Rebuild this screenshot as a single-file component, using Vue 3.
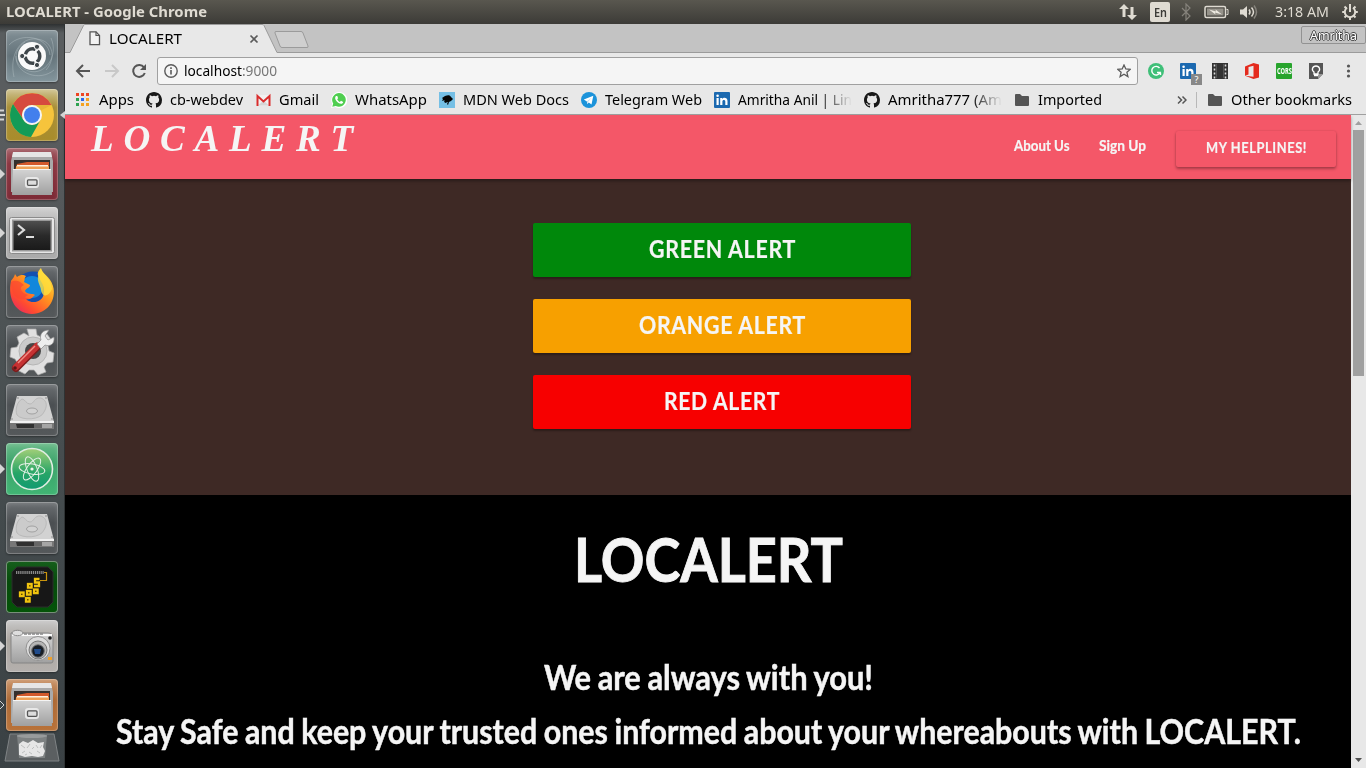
<script setup>
// Stretches a label horizontally so that it occupies an exact width.
const vFit = {
  mounted(el, { value }) {
    const natural = el.getBoundingClientRect().width
    el.style.transform = `scaleX(${value / natural})`
    el.style.marginRight = `${value - natural}px`
  }
}

const launcher = [
  { icon: 'dash', tile: 'slate' },
  { icon: 'chrome', tile: 'gold', mark: 'multi', active: true },
  { icon: 'files', tile: 'wine', mark: 'solid' },
  { icon: 'terminal', tile: 'silver', mark: 'solid' },
  { icon: 'firefox', tile: 'dark' },
  { icon: 'settings', tile: 'dark' },
  { icon: 'disk', tile: 'dark' },
  { icon: 'atom', tile: 'mint', mark: 'solid' },
  { icon: 'disk', tile: 'dark' },
  { icon: 'snake', tile: 'forest' },
  { icon: 'camera', tile: 'pale', mark: 'solid' },
  { icon: 'files', tile: 'copper', mark: 'hollow' }
]

const bookmarks = [
  { icon: 'apps', text: 'Apps', w: 35 },
  { icon: 'github', text: 'cb-webdev', w: 73 },
  { icon: 'gmail', text: 'Gmail', w: 40 },
  { icon: 'whatsapp', text: 'WhatsApp', w: 72 },
  { icon: 'mdn', text: 'MDN Web Docs', w: 106 },
  { icon: 'telegram', text: 'Telegram Web', w: 97 },
  { icon: 'linkedin', text: 'Amritha Anil | Lin', w: 114, clip: true },
  { icon: 'github', text: 'Amritha777 (Am', w: 114, clip: true },
  { icon: 'folder', text: 'Imported', w: 64 }
]

const alerts = [
  { kind: 'green', text: 'GREEN ALERT', w: 147 },
  { kind: 'orange', text: 'ORANGE ALERT', w: 167 },
  { kind: 'red', text: 'RED ALERT', w: 116 }
]
</script>

<template>
  <div class="desktop">
    <svg class="defs" aria-hidden="true">
      <defs>
        <linearGradient id="gMetal" x1="0" y1="0" x2="0" y2="1"><stop offset="0" stop-color="#d4d4d4" /><stop offset="1" stop-color="#a0a0a0" /></linearGradient>
        <linearGradient id="gDark" x1="0" y1="0" x2="0" y2="1"><stop offset="0" stop-color="#4e4e4e" /><stop offset=".5" stop-color="#2a2a2a" /><stop offset="1" stop-color="#1a1a1a" /></linearGradient>
        <linearGradient id="gFox" x1=".9" y1="0" x2=".1" y2="1"><stop offset="0" stop-color="#fff04a" /><stop offset=".4" stop-color="#ff9a1e" /><stop offset=".75" stop-color="#ff4b30" /><stop offset="1" stop-color="#e5226a" /></linearGradient>
        <linearGradient id="gAtom" x1="0" y1="0" x2="0" y2="1"><stop offset="0" stop-color="#a3cf78" /><stop offset=".6" stop-color="#27a567" /><stop offset="1" stop-color="#109a71" /></linearGradient>
      </defs>

      <symbol id="dash" viewBox="0 0 52 52">
        <g fill="none" stroke="#c7d0d4" stroke-opacity=".35">
          <path d="M8 47C3 25 14 7 31 9s19 20 9 31M45 8c8 18-6 38-22 33S6 21 19 12M3 15C15 2 42 6 44 25M48 40C34 52 9 44 10 26" />
        </g>
        <circle cx="26" cy="26.500" r="14.500" fill="#68757a" opacity=".5" />
        <circle cx="26" cy="26" r="14" fill="#fafafa" />
        <circle cx="26.500" cy="26" r="7.300" fill="none" stroke="#3f464a" stroke-width="3.400" stroke-dasharray="12.800 2.500" stroke-dashoffset="6" />
        <g fill="#3f464a" stroke="#fafafa" stroke-width="1"><circle cx="16.200" cy="26" r="2.600" /><circle cx="31" cy="16.800" r="2.600" /><circle cx="31" cy="35" r="2.600" /></g>
      </symbol>

      <symbol id="chrome" viewBox="0 0 52 52">
        <circle cx="26" cy="26" r="22" fill="#f6c43c" />
        <path d="M7 15A22 22 0 0 1 45.500 16H26a10 10 0 0 0-9 14z" fill="#d64a3e" />
        <path d="M7 15a22 22 0 0 0 18 33l9.500-17A10 10 0 0 1 17 30z" fill="#149b57" />
        <path d="M26 16h19.500L34 22z" fill="#d9a832" opacity=".5" />
        <circle cx="26" cy="26" r="10" fill="#f4f4f4" /><circle cx="26" cy="26" r="8" fill="#427fed" />
      </symbol>

      <symbol id="files" viewBox="0 0 52 52">
        <path d="M7 5h38l2 8v31H5V13z" fill="#a9a9a9" /><path d="M7 4h38l1 5H6z" fill="#e6e6e6" />
        <path d="M8 12h36v12H8z" fill="#35302d" />
        <path d="M11 16l10-2h22v8H9z" fill="#d3592b" /><path d="M10 18h33v6H10z" fill="#f0a055" /><path d="M11 17h31v1.500H11z" fill="#fff0df" />
        <path d="M7 21h38l1 26H6z" fill="url(#gMetal)" /><path d="M7 21h38v1H7z" fill="#f4f4f4" />
        <rect x="20" y="30" width="12" height="9" rx="2" fill="#ddd" stroke="#e8e8e8" stroke-width="2" />
        <rect x="21.500" y="31.800" width="9.500" height="5.500" rx="1" fill="#ddd" stroke="#555" stroke-width="1.300" />
      </symbol>

      <symbol id="terminal" viewBox="0 0 52 52">
        <rect x="3.500" y="10.500" width="45" height="36" rx="2" fill="#e6e6e6" stroke="#8b8b8b" />
        <rect x="6" y="12.500" width="40" height="32" fill="#999" /><rect x="7.500" y="14" width="37" height="29" fill="url(#gDark)" />
        <path d="M12 18l6 5-6 5" fill="none" stroke="#ddd" stroke-width="2.200" /><path d="M20 30h8" stroke="#ddd" stroke-width="2" />
      </symbol>

      <symbol id="firefox" viewBox="0 0 52 52">
        <circle cx="27" cy="25" r="19.500" fill="#1450b0" /><circle cx="26" cy="21" r="11" fill="#1287dc" />
        <path d="M5 15c1-2 3-3 4-7l2 3c4-3 7-2 9-1-2 2-1 4-2 6l6 3c0 3-4 3-5 6 2 4 8 2 10 4-3 2-3 5-9 4 6 6 17 3 18-6s-4-11-6-18C31 7 33 4 35 2c1 6 9 8 12 18 4 14-6 28-21 28C11 48 1 34 5 15z" fill="url(#gFox)" />
        <path d="M35 3c2 6 10 9 11 20-4 9-10 8-11 1 0-5-7-10 0-21z" fill="#ffe03d" opacity=".8" />
        <path d="M5 16c5-3 10 0 13 3-6 2-3 8 4 10-5 3-3 3 2 3-10 5-20-2-19-16z" fill="#fb4630" opacity=".7" />
      </symbol>

      <symbol id="settings" viewBox="0 0 52 52">
        <path d="M21 4h9l1 6 4 2 6-3 5 7-4 5 1 5 5 2-1 9-6 1-3 4 2 5-8 3-4-5h-5l-4 4-8-4 1-6-3-5-5-2 1-9 6-1 2-4-2-6 7-4 5 3z" fill="#e0e0e0" stroke="#aaa" stroke-width=".7" />
        <circle cx="27" cy="26" r="14" fill="#cbcbcb" stroke="#b5b5b5" /><circle cx="27" cy="26" r="8" fill="#474747" />
        <path d="M10 43L31 22" stroke="#7c1b1b" stroke-width="8" stroke-linecap="round" /><path d="M10 42L31 21" stroke="#c63132" stroke-width="6.500" stroke-linecap="round" /><path d="M12 38L29 21" stroke="#ef8e84" stroke-width="1.500" />
        <path d="M31 19l4-4c-2-6 2-10 8-10l-4 6 3 4 6-3c1 7-4 10-9 8l-4 4z" fill="#eee" stroke="#888" stroke-width=".7" />
        <circle cx="9" cy="43" r="1.800" fill="#5c1717" />
      </symbol>

      <symbol id="disk" viewBox="0 0 52 52">
        <path d="M11 12h30l7 26H4z" fill="#d2d2d2" /><path d="M4 37h44v8H4z" fill="#777" /><path d="M4 37h44v2H4z" fill="#f1f1f1" />
        <path d="M10 40h18v4H11z" fill="#303030" /><path d="M28 40h8v4h-8z" fill="#666" /><path d="M36 40h10v4H36z" fill="#a5a5a5" />
        <path d="M16 15c-5 3-7 10-5 16 5 6 24 5 27-3 3-5 4-11-3-14-7-1-7 6-11 6s-5-5-8-5z" fill="#cbcbcb" stroke="#b9b9b9" />
        <ellipse cx="26" cy="27" rx="5.500" ry="3" fill="#d2d2d2" stroke="#a2a2a2" />
        <g fill="#777"><circle cx="12" cy="14" r=".7" /><circle cx="40" cy="14" r=".7" /><circle cx="6" cy="35" r=".7" /><circle cx="46" cy="35" r=".7" /></g>
      </symbol>

      <symbol id="atom" viewBox="0 0 52 52">
        <circle cx="26" cy="26" r="20.500" fill="url(#gAtom)" stroke="#e0ede2" stroke-width="1.600" />
        <g fill="none" stroke="#e4f0e6" stroke-width="1"><ellipse cx="26" cy="26" rx="13" ry="5" transform="rotate(10 26 26)" /><ellipse cx="26" cy="26" rx="13" ry="5" transform="rotate(68 26 26)" /><ellipse cx="26" cy="26" rx="13" ry="5" transform="rotate(126 26 26)" /></g>
        <circle cx="26" cy="26" r="1.600" fill="#eef6ee" />
      </symbol>

      <symbol id="snake" viewBox="0 0 52 52">
        <path d="M11 6h31l5 5v30l-5 5H11l-5-5V11z" fill="#171717" stroke="#2c2c2c" />
        <path d="M10 11.500h28" stroke="#888" stroke-width="3" stroke-dasharray="1.300 .8" />
        <path d="M34 19.500h6.500v-8H38" fill="none" stroke="#c9940d" stroke-width="1.200" />
        <g fill="#3a2b00" stroke="#f1c40f" stroke-width="2.300"><path d="M33.500 18h-4.500v3.500h4V25h-5" fill="none" /><rect x="22" y="23" width="3.600" height="3.600" /><rect x="28" y="28.500" width="3.600" height="3.600" /><rect x="21" y="30" width="3.600" height="3.600" /><rect x="14" y="31.500" width="3.600" height="3.600" /><rect x="20" y="37" width="3.600" height="3.600" /></g>
      </symbol>

      <symbol id="camera" viewBox="0 0 52 52">
        <path d="M5 13h37q5 0 5 5v23q0 2-2 2H7q-2 0-2-2z" fill="url(#gMetal)" stroke="#858585" /><path d="M6 14h40v2H6z" fill="#fafafa" />
        <ellipse cx="11.500" cy="13" rx="5.500" ry="2.700" fill="#ddd" stroke="#888" /><path d="M18 14h20" stroke="#888" stroke-width="1.500" stroke-dasharray="3 1" />
        <circle cx="32" cy="28.500" r="12" fill="#dcdcdc" stroke="#929292" /><circle cx="32" cy="30" r="9" fill="#b5b5b5" stroke="#777" /><circle cx="32" cy="31" r="6.300" fill="#171d25" stroke="#777" /><path d="M28 29h7l-1 5h-5z" fill="#214c8c" />
        <circle cx="44" cy="18" r="1.800" fill="#222" /><path d="M42 37h4v3h-4z" fill="#f0a12b" />
      </symbol>

      <symbol id="apps" viewBox="0 0 16 16"><path d="M1 1h3v3H1zM6 1h3v3H6zM11 1h3v3h-3z" fill="#ee4522" /><path d="M1 6h3v3H1zM1 11h3v3H1z" fill="#2ea250" /><path d="M6 6h3v3H6z" fill="#2a67ee" /><path d="M6 11h3v3H6zM11 6h3v3h-3zM11 11h3v3h-3z" fill="#f5a222" /></symbol>
      <symbol id="github" viewBox="0 0 16 16"><path fill="#181818" d="M8 0C3.58 0 0 3.58 0 8c0 3.54 2.29 6.53 5.47 7.59.4.07.55-.17.55-.38 0-.19-.01-.82-.01-1.49-2.01.37-2.53-.49-2.69-.94-.09-.23-.48-.94-.82-1.13-.28-.15-.68-.52-.01-.53.63-.01 1.08.58 1.23.82.72 1.21 1.87.87 2.33.66.07-.52.28-.87.51-1.07-1.78-.2-3.64-.89-3.64-3.95 0-.87.31-1.59.82-2.15-.08-.2-.36-1.02.08-2.12 0 0 .67-.21 2.2.82a7.6 7.6 0 0 1 4 0c1.53-1.04 2.2-.82 2.2-.82.44 1.1.16 1.92.08 2.12.51.56.82 1.27.82 2.15 0 3.07-1.87 3.75-3.65 3.95.29.25.54.73.54 1.48 0 1.07-.01 1.93-.01 2.2 0 .21.15.46.55.38A8 8 0 0 0 16 8c0-4.42-3.58-8-8-8z" /></symbol>
      <symbol id="gmail" viewBox="0 0 16 16"><path d="M2 3h13v11H2z" fill="#f1f1f1" /><path d="M3 13.500l5.500-5 5.500 5z" fill="#d6d6d6" /><path d="M2.500 14V4l6 5.400 6-5.400v10" fill="none" stroke="#d92d2d" stroke-width="2" /></symbol>
      <symbol id="whatsapp" viewBox="0 0 16 16"><path d="M0 16l1.200-4.300A8 8 0 1 1 4.400 15z" fill="#fff" /><path d="M1.300 14.700l.9-3.200a6.800 6.800 0 1 1 2.600 2.400z" fill="#4fce50" /><path d="M5 4c-2 2 0 5 2.200 6.700C9.500 12.500 12 12 12.200 10L10 8.700l-1.200 1.200C7.600 9.400 6.700 8.400 6.200 7.200l.9-1L6.300 4z" fill="#fff" /></symbol>
      <symbol id="mdn" viewBox="0 0 16 16"><path d="M0 0h16v16H0z" fill="#75bfe5" /><path d="M3 6l3-2c3-1 5-1 6 1l2 2-2 2-2 1-1 3-1-1 1-2-3 1-1-2 1-1-3 1 1-2z" fill="#050505" /></symbol>
      <symbol id="telegram" viewBox="0 0 16 16"><circle cx="8" cy="8" r="8" fill="#1c93da" /><path d="M2.800 7.500l9.500-3.700-1.800 8.700-2.700-2-1.600 1.500-.3-2.600z" fill="#fff" /><path d="M5.900 9.400l4.500-3.700-3.600 4.500-.6 1.800z" fill="#b9d9ee" /></symbol>
      <symbol id="linkedin" viewBox="0 0 16 16"><rect width="16" height="16" rx="1" fill="#1b69b0" /><path d="M2.500 6h2.200v7H2.500zM6.200 6h2v1c1.300-1.900 5.300-1.600 5.300 2v4h-2.200V9.400c0-2-2.900-2-2.900 0V13H6.200z" fill="#fff" /><circle cx="3.600" cy="3.800" r="1.300" fill="#fff" /></symbol>
      <symbol id="folder" viewBox="0 0 16 16"><path d="M1 3q0-1 1-1h4l2 2h6q1 0 1 1v8q0 1-1 1H2q-1 0-1-1z" fill="#555" /></symbol>
    </svg>

    <header class="panel">
      <span class="win-title" v-fit="201">LOCALERT - Google Chrome</span>
      <div class="indicators">
        <svg width="20" height="18" viewBox="0 0 20 18"><path d="M6 1L1 6h3.500v8h3V6H11zM14 17l5-5h-3.500V4h-3v8H9z" fill="#dfdbd2" /></svg>
        <span class="lang"><span v-fit="13">En</span></span>
        <svg class="bt" width="10" height="18" viewBox="0 0 10 18"><path d="M1 5l8 8-4 4V1l4 4-8 8" fill="none" stroke="#85827b" stroke-width="1.200" /></svg>
        <svg class="battery" width="25" height="14" viewBox="0 0 25 14"><rect x="1" y="1.500" width="20.500" height="11" rx="1.500" fill="none" stroke="#dfdbd2" stroke-width="1.500" /><path d="M22.500 4.500h1.500v5h-1.500" fill="none" stroke="#dfdbd2" /><path d="M3 3.500h16.500v7H3z" fill="#96938b" /><path d="M5 4.500l7 2-.5-2L18 9.500l-7-2 .5 2z" fill="#eeeae1" /></svg>
        <svg class="sound" width="20" height="16" viewBox="0 0 20 16"><path d="M1 5.500h3L8 2v12l-4-3.500H1z" fill="#dfdbd2" /><path d="M10 5.500q2 2.500 0 5M12.500 3.500q4 4.500 0 9" fill="none" stroke="#dfdbd2" stroke-width="1.500" /><path d="M15 1.500q5 6.500 0 13" fill="none" stroke="#85827b" stroke-width="1.500" /></svg>
        <span class="clock" v-fit="54">3:18 AM</span>
        <svg class="gear" width="18" height="18" viewBox="0 0 18 18"><path d="M6 4.700a5.200 5.200 0 1 0 6 0" fill="none" stroke="#dfdbd2" stroke-width="2" /><path d="M9 1v8M1.200 9H4M14 9h2.800M3.500 14.500l2-2M14.500 14.500l-2-2M9 14v3M3.500 3.500l2 2M14.500 3.500l-2 2" stroke="#dfdbd2" stroke-width="2" /></svg>
      </div>
    </header>

    <div class="workspace">
      <aside class="launcher">
        <div v-for="(item, i) in launcher" :key="i" class="tile" :class="item.tile">
          <svg width="52" height="52"><use :href="'#' + item.icon" /></svg>
          <svg v-if="item.mark === 'solid'" class="mark" width="6" height="10"><path d="M0 0l5 5-5 5z" fill="#d5d5d5" /></svg>
          <svg v-if="item.mark === 'hollow'" class="mark" width="6" height="10"><path d="M0 1l4 4-4 4" fill="none" stroke="#d5d5d5" /></svg>
          <svg v-if="item.mark === 'multi'" class="mark multi" width="6" height="12"><path d="M0 1.500h4M0 6h5M0 10.500h4" stroke="#d5d5d5" stroke-width="1.800" /></svg>
          <svg v-if="item.active" class="focus" width="6" height="10"><path d="M6 1v8L1 5z" fill="#d5d5d5" /></svg>
        </div>
        <svg class="trash" width="58" height="30" viewBox="0 0 58 30"><path d="M7 1h44l5 27H2z" fill="#5b5f61" stroke="#7f8385" /><path d="M14 2h30l-2 23H16z" fill="#7d8182" /><ellipse cx="29" cy="3" rx="15" ry="2" fill="#989b9c" /><path d="M16 11l4-3 5 2 5-3 5 3 6-1-1 5 2 4-2 5-5 1-6-1-7 1-6-2v-5z" fill="#e6e6e6" /><path d="M18 12l4 3M27 11l-3 4M33 12l2 3M39 12l-2 3M19 20l3-2M26 19l3 2M34 18l3 2M22 22l2-1M31 14l-2 2" fill="none" stroke="#bdbfbf" /></svg>
      </aside>

      <main class="browser">
        <div class="tabstrip">
          <svg class="tab-shape" width="250" height="29" viewBox="0 0 250 29"><path d="M0 29V28.500H5L18.500 1.500Q19 .5 20 .5H197Q198.500.5 199 1.500L212 28.500H250V29z" fill="#e8e8e8" /><path d="M0 28.500H5L18.500 1.500Q19 .5 20 .5H197Q198.500.5 199 1.500L212 28.500H250" fill="none" stroke="#9b9b9b" /><path d="M211 7.500h25q1.500 0 2 1.500l5 13q.5 1.500-1 1.500h-25q-1.500 0-2-1.500l-5-13q-.5-1.500 1-1.500z" fill="#cfcfcf" stroke="#9b9b9b" /></svg>
          <div class="tab">
            <svg width="12" height="15" viewBox="0 0 12 15"><path d="M1 .8h6l3.500 3.700v9.200H1z" fill="#f2f2f2" stroke="#555" stroke-width="1.300" /><path d="M7 .8v3.700h3.500" fill="none" stroke="#555" stroke-width="1.200" /></svg>
            <span class="tab-name" v-fit="73">LOCALERT</span>
            <svg class="close" width="10" height="10" viewBox="0 0 10 10"><path d="M1.500 1.500l7 7M8.500 1.500l-7 7" stroke="#5a5a5a" stroke-width="1.700" /></svg>
          </div>
          <div class="profile"><span v-fit="47">Amritha</span></div>
        </div>

        <div class="toolbar">
          <svg class="back" width="16" height="16" viewBox="0 0 16 16"><path d="M15 8H2M8 2L2 8l6 6" fill="none" stroke="#555" stroke-width="2" /></svg>
          <svg class="forward" width="16" height="16" viewBox="0 0 16 16"><path d="M1 8h13M8 2l6 6-6 6" fill="none" stroke="#c8c8c8" stroke-width="2" /></svg>
          <svg class="reload" width="16" height="16" viewBox="0 0 16 16"><path d="M13 4.300A6 6 0 1 0 13.800 10" fill="none" stroke="#555" stroke-width="2" /><path d="M15 1v6H9z" fill="#555" /></svg>
          <div class="omnibox">
            <svg width="14" height="14" viewBox="0 0 14 14"><circle cx="7" cy="7" r="6.200" fill="none" stroke="#5b5b5b" stroke-width="1.400" /><path d="M7 6v4.500M7 3.300v1.600" stroke="#5b5b5b" stroke-width="1.600" /></svg>
            <span class="url" v-fit="93">localhost<i>:9000</i></span>
            <svg class="star" width="14" height="14" viewBox="0 0 14 14"><path d="M7 1l1.800 4 4.400.4-3.300 2.900 1 4.300L7 10.300l-3.900 2.300 1-4.300L.8 5.400 5.200 5z" fill="none" stroke="#5b5b5b" stroke-width="1.300" /></svg>
          </div>
          <div class="extensions">
            <svg width="16" height="16" viewBox="0 0 16 16"><circle cx="8" cy="8" r="8" fill="#3fbf78" /><path d="M11.500 5A4.300 4.300 0 1 0 12 9.500H9M12.500 9.500V12" fill="none" stroke="#fff" stroke-width="1.400" /></svg>
            <div class="ext-in"><svg width="16" height="16"><use href="#linkedin" /></svg><span>?</span></div>
            <svg width="16" height="16" viewBox="0 0 16 16"><path d="M0 0h16v16H0z" fill="#333" /><path d="M4.500 1v14M11.500 1v14" stroke="#555" /><path d="M2.500 1.500v14M13.500 1.500v14" stroke="#ddd" stroke-width="1.600" stroke-dasharray="2 2" /></svg>
            <svg width="16" height="16" viewBox="0 0 16 16"><path fill-rule="evenodd" d="M1 3.500L9.500 0 15 1.500v13L9.500 16 1 12.700l8.500 1V2.800L4.500 4v7.500L1 12.700z" fill="#e42a1d" /></svg>
            <div class="cors"><span v-fit="15">CORS</span></div>
            <svg width="16" height="16" viewBox="0 0 16 16"><path d="M1 0h14v11l-5 5H1z" fill="#555" /><path d="M10 16v-5h5z" fill="#999" /><path d="M6 9c-3-2-1.500-6 2-6s5 4 2 6v2H6zM6 12.500h4" fill="none" stroke="#fff" stroke-width="1.300" /></svg>
            <svg width="16" height="16" viewBox="0 0 16 16"><g fill="#555"><circle cx="8.500" cy="3" r="1.600" /><circle cx="8.500" cy="8" r="1.600" /><circle cx="8.500" cy="13" r="1.600" /></g></svg>
          </div>
        </div>

        <nav class="bookmarks">
          <div v-for="b in bookmarks" :key="b.text" class="bookmark">
            <svg width="16" height="16"><use :href="'#' + b.icon" /></svg>
            <span class="label" :class="{ faded: b.clip }"><span v-fit="b.w">{{ b.text }}</span></span>
          </div>
          <svg class="more" width="10" height="10" viewBox="0 0 10 10"><path d="M1 1.500L4.500 5 1 8.500M5.500 1.500L9 5 5.500 8.500" fill="none" stroke="#555" stroke-width="1.500" /></svg>
          <div class="divider"></div>
          <div class="bookmark other">
            <svg width="16" height="16"><use href="#folder" /></svg>
            <span class="label"><span v-fit="121">Other bookmarks</span></span>
          </div>
        </nav>

        <div class="viewport">
          <div class="page">
            <div class="navbar">
              <span class="logo" v-fit="272">LOCALERT</span>
              <div class="links">
                <a v-fit="55.5">About Us</a>
                <a v-fit="47">Sign Up</a>
                <div class="helplines"><span v-fit="101">MY HELPLINES!</span></div>
              </div>
            </div>
            <section class="alerts">
              <div v-for="a in alerts" :key="a.kind" class="alert" :class="a.kind"><span v-fit="a.w">{{ a.text }}</span></div>
            </section>
            <section class="about">
              <h1><span v-fit="269">LOCALERT</span></h1>
              <p><span v-fit="329">We are always with you!</span></p>
              <p><span v-fit="1185">Stay Safe and keep your trusted ones informed about your whereabouts with LOCALERT.</span></p>
            </section>
          </div>
          <div class="scrollbar">
            <svg width="15" height="15"><path d="M4 10h7L7.500 6z" fill="#a0a0a0" /></svg>
            <div class="thumb"></div>
            <svg class="down" width="15" height="15"><path d="M4 5h7l-3.500 4z" fill="#505050" /></svg>
          </div>
        </div>
      </main>
    </div>
  </div>
</template>

<style>
html, body { margin: 0; overflow: hidden; }
</style>

<style scoped>
* { box-sizing: border-box; }
.desktop { width: 1366px; height: 768px; overflow: hidden; display: flex; flex-direction: column; font: 14.5px "Noto Sans", sans-serif; color: #000; }
.defs { position: absolute; width: 0; height: 0; }
svg { display: block; flex: none; }
span, a { display: inline-block; white-space: pre; transform-origin: 0 50%; flex: none; }

.panel { height: 24px; flex: none; display: flex; align-items: center; padding: 0 7px 0 6px; background: linear-gradient(#59574f, #3c3b37); color: #dfdbd2; }
.win-title { font-weight: 700; font-size: 14px; line-height: 24px; }
.indicators { margin-left: auto; display: flex; align-items: center; height: 24px; }
.lang { width: 20px; height: 20px; margin-left: 12px; display: flex; justify-content: center; align-items: center; border-radius: 2px; background: #dfdbd2; color: #3c3b37; font-size: 13px; font-weight: 600; line-height: 20px; }
.bt { margin-left: 11px; }
.battery { margin-left: 13px; }
.sound { margin-left: 10px; }
.clock { margin-left: 16px; line-height: 22px; margin-top: -2px; }
.gear { margin-left: 12px; }

.workspace { flex: 1; display: flex; min-height: 0; }
.launcher { width: 65px; flex: none; padding: 6px 0 0 6px; display: flex; flex-direction: column; gap: 7px; background: linear-gradient(#2e3132 0, #595d5f 9px, #5a5d5f 90px, #474e50 400px, #3a4144); border-right: 1px solid #2f3334; }
.tile { position: relative; width: 52px; height: 52px; flex: none; border-radius: 4px; box-shadow: inset 0 0 0 1px rgba(255, 255, 255, .22), inset 0 2px 5px rgba(255, 255, 255, .15), 0 1px 2px rgba(0, 0, 0, .35); }
.slate { background: linear-gradient(#829096, #64737a 50%, #84969d); }
.gold { background: linear-gradient(#cfc390, #a98f37 35%, #a88c2b); }
.wine { background: linear-gradient(#a45f67, #8b3540 30%, #7c2935); }
.silver { background: linear-gradient(#d0d0d0, #b0b0b0 40%, #aaa); }
.dark { background: linear-gradient(#6c7073, #4b4f52 40%, #55595b); }
.mint { background: linear-gradient(#69ba88, #3ba36a 40%, #41b574); }
.forest { background: linear-gradient(#165f1c, #064b0b 40%, #045408); box-shadow: inset 0 0 0 1px #78907a; }
.pale { background: linear-gradient(#c8c8c8, #aaa59f 40%, #b4b0ad); }
.copper { background: linear-gradient(#cb966c, #ad6934 40%, #b87239); }
.mark { position: absolute; left: -6px; top: 21px; }
.multi { top: 20px; }
.focus { position: absolute; right: -7px; top: 21px; }
.trash { margin: -5px 0 0 -3px; }

.browser { flex: 1; min-width: 0; display: flex; flex-direction: column; background: #e8e8e8; }
.tabstrip { position: relative; height: 29px; flex: none; background: linear-gradient(#c3c3c3 28px, #9b9b9b 28px); }
.tab-shape { position: absolute; left: 0; top: 0; }
.tab { position: relative; display: flex; align-items: center; width: 194px; height: 29px; padding-left: 24px; }
.tab-name { margin: -2px 0 0 8px; }
.close { margin-left: auto; }
.profile { position: absolute; right: 0; top: 2px; width: 65px; height: 18px; padding-left: 8px; border: 1px solid #929292; border-radius: 2px; color: #fff; font-size: 13px; line-height: 16px; text-shadow: 1px 0 #444, -1px 0 #444, 0 1px #444, 0 -1px #444; }

.toolbar { height: 34px; flex: none; display: flex; align-items: center; padding: 2px 0 0 10px; }
.forward { margin-left: 13px; }
.reload { margin-left: 11px; }
.omnibox { width: 981px; height: 28px; margin-left: 10px; padding: 0 6px; display: flex; align-items: center; background: #f5f5f5; border: 1px solid #a0a0a0; border-radius: 3px; }
.url { margin: -2px 0 0 6px; }
.url i { font-style: normal; color: #777; }
.star { margin-left: auto; }
.extensions { display: flex; gap: 16px; margin-left: 10px; }
.ext-in { position: relative; }
.ext-in span { position: absolute; left: 11px; top: 11px; width: 11px; height: 11px; background: #888; color: #fff; font-size: 9px; line-height: 11px; text-align: center; }
.cors { width: 16px; height: 16px; padding-left: .5px; background: #27a42c; color: #fff; font-size: 9.5px; font-weight: 700; line-height: 15px; border-radius: 1px; }

.bookmarks { height: 28px; flex: none; display: flex; align-items: center; gap: 12px; padding: 0 14px 2px 10px; border-bottom: 1px solid #a0a0a0; }
.bookmark { display: flex; align-items: center; gap: 8px; height: 26px; }
.label { line-height: 26px; margin-top: -2px; }
.faded { mask-image: linear-gradient(90deg, #000 82px, transparent 114px); }
.more { margin-left: auto; }
.divider { width: 1px; height: 16px; margin-left: -3px; background: #b8b8b8; }
.other { margin-left: -2px; }

.viewport { flex: 1; display: flex; min-height: 0; }
.page { width: 1286px; flex: none; display: flex; flex-direction: column; font-family: Lato, sans-serif; font-weight: 700; color: #f5f5f5; }
.navbar { position: relative; height: 64px; flex: none; display: flex; background: #f45768; box-shadow: 0 2px 3px rgba(0, 0, 0, .35); }
.logo { margin: 1px 0 0 26px; font: italic 700 38px/44px "Liberation Serif", serif; letter-spacing: 10px; }
.links { margin-left: auto; display: flex; align-items: center; gap: 30px; padding-right: 15px; font-size: 14.5px; }
.links a { margin-top: -4px; -webkit-text-stroke: .2px #f5f5f5; }
.helplines { width: 160px; height: 36px; margin-top: 4px; padding-left: 30px; line-height: 33px; font-size: 14.5px; letter-spacing: .7px; -webkit-text-stroke: .2px #f5f5f5; border-radius: 2px; box-shadow: 0 2px 3px rgba(0, 0, 0, .3), 0 0 2px rgba(0, 0, 0, .15); }
.alerts { height: 316px; flex: none; display: flex; flex-direction: column; align-items: center; gap: 22px; padding: 44px 0 0 28px; background: #3e2925; }
.alert { width: 378px; height: 54px; display: flex; justify-content: center; border-radius: 2px; font-size: 25px; line-height: 51px; letter-spacing: .8px; -webkit-text-stroke: .2px #f5f5f5; box-shadow: 0 2px 2px rgba(0, 0, 0, .3); }
.green { background: #00880b; }
.orange { background: #f7a000; }
.red { background: #f70000; }
.about { flex: 1; background: #000; padding-top: 26px; text-align: center; overflow: hidden; }
h1 { margin: 0 0 54px; font-size: 62px; line-height: 75px; font-weight: 700; -webkit-text-stroke: .9px #f5f5f5; }
p { margin: 0; font-size: 34px; line-height: 54px; white-space: nowrap; display: flex; justify-content: center; word-spacing: -1px; -webkit-text-stroke: .5px #f5f5f5; }
.scrollbar { width: 15px; flex: none; display: flex; flex-direction: column; background: #e8e8e8; }
.thumb { width: 11px; height: 246px; margin-left: 2px; background: #a0a0a0; }
.down { margin-top: auto; }
</style>
